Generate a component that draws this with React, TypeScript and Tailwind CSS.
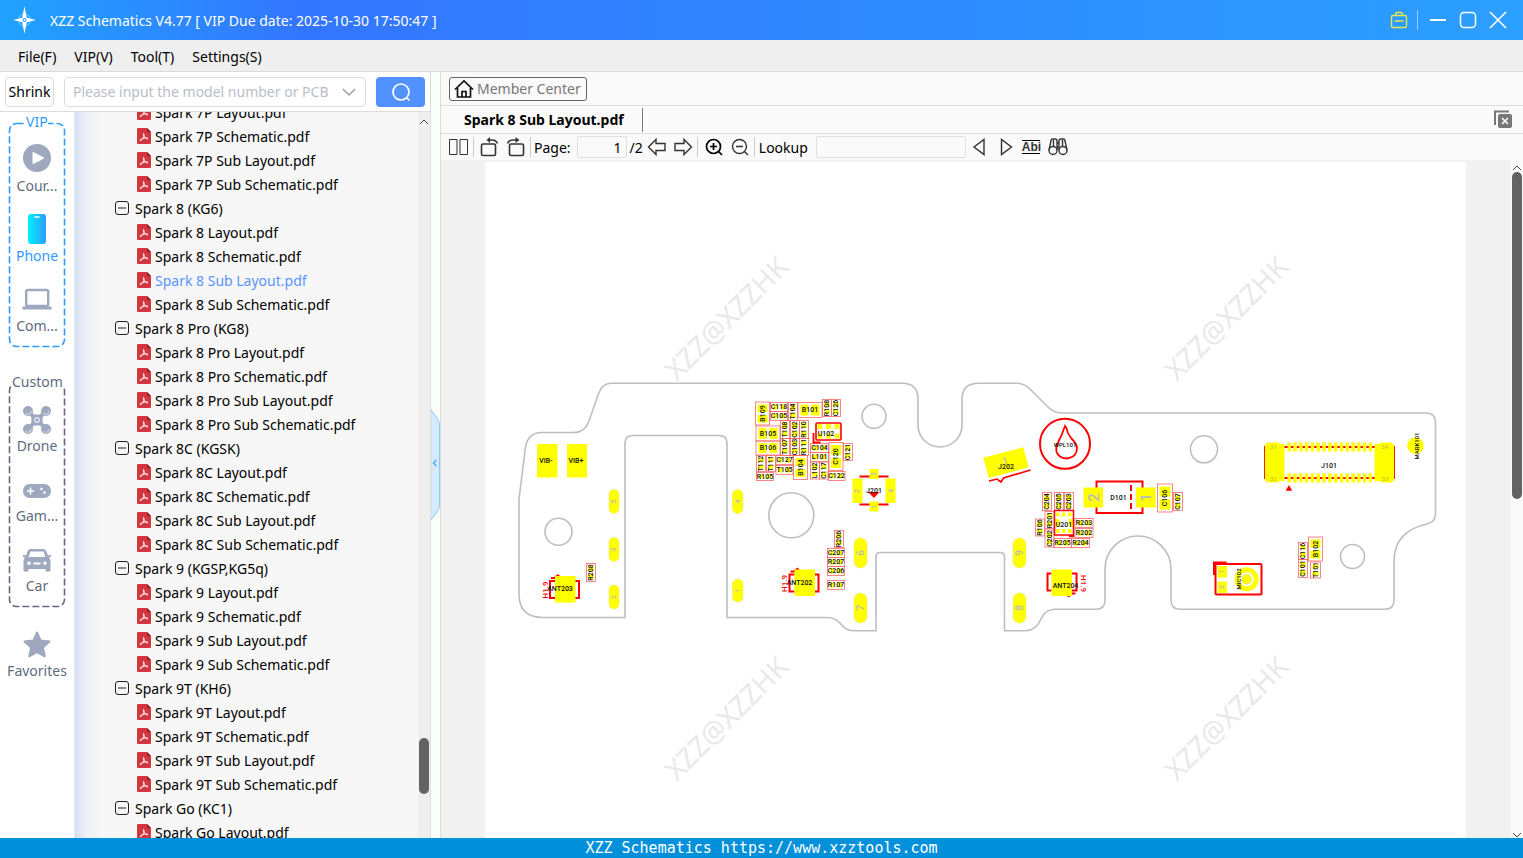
import React from 'react';

type Group = { name: string; files: string[] };

const model = (name: string, prefix: string): Group => ({
  name,
  files: ['Layout', 'Schematic', 'Sub Layout', 'Sub Schematic'].map(s => `${prefix} ${s}.pdf`),
});

const leading = ['Spark 7P Layout.pdf', 'Spark 7P Schematic.pdf', 'Spark 7P Sub Layout.pdf', 'Spark 7P Sub Schematic.pdf'];

const groups: Group[] = [
  model('Spark 8 (KG6)', 'Spark 8'),
  model('Spark 8 Pro (KG8)', 'Spark 8 Pro'),
  model('Spark 8C (KGSK)', 'Spark 8C'),
  model('Spark 9 (KGSP,KG5q)', 'Spark 9'),
  model('Spark 9T (KH6)', 'Spark 9T'),
  { name: 'Spark Go (KC1)', files: ['Spark Go Layout.pdf'] },
];

const activeFile = 'Spark 8 Sub Layout.pdf';

/* ---------- title bar ---------- */

function TitleBar() {
  return (
    <header className="flex h-10 shrink-0 items-center bg-linear-to-r from-[#1fa2ff] via-[#3375ff] via-20% to-[#2b9fff] pl-3 pr-[15px] text-white">
      <svg className="size-7 shrink-0" viewBox="0 0 28 28" fill="#fff">
        <circle cx="12.500" cy="14" r="6" fill="none" stroke="#fff" strokeWidth="1" opacity=".45" />
        <path d="M12.500 0l2.200 11.800L24 14l-9.300 2.200L12.500 28l-2.200-11.800L1 14l9.300-2.200z" />
        <circle cx="12.500" cy="14" r="2" fill="#2b95ff" />
        <circle cx="12.500" cy="14" r="1" />
      </svg>
      <h1 className="ml-2.5 flex-1 text-[14px]">XZZ Schematics V4.77 [ VIP Due date: 2025-10-30 17:50:47 ]</h1>
      <div className="flex items-center">
        <button aria-label="Toolbox">
          <svg className="size-5" viewBox="0 0 20 20" fill="none" stroke="#e3e84a" strokeWidth="1.4">
            <rect x="2.500" y="5.500" width="15" height="12" rx="1.500" />
            <path d="M6.500 5.500V4Q6.500 2.500 8 2.500h4q1.500 0 1.500 1.500v1.500M5.500 11h9" />
          </svg>
        </button>
        <span className="ml-2 mr-2.5 h-5 w-px bg-white/50" />
        <button aria-label="Minimize" className="mr-2.5">
          <svg className="size-5" viewBox="0 0 20 20" stroke="#fff" strokeWidth="2"><path d="M2 10h16" /></svg>
        </button>
        <button aria-label="Maximize" className="mr-2.5">
          <svg className="size-5" viewBox="0 0 20 20" fill="none" stroke="#fff" strokeWidth="1.500"><rect x="2.500" y="2.500" width="15" height="15" rx="3.500" /></svg>
        </button>
        <button aria-label="Close">
          <svg className="size-5" viewBox="0 0 20 20" stroke="#fff" strokeWidth="1.600"><path d="M2 2l16 16M18 2L2 18" /></svg>
        </button>
      </div>
    </header>
  );
}

/* ---------- category rail ---------- */

const CourseIcon = () => (
  <svg className="mb-1 size-7" viewBox="0 0 28 28" fill="#9ea8be">
    <circle cx="14" cy="14" r="14" />
    <path d="M9.500 9.200Q9.500 7.500 11 8.300l9.500 4.900q1.300.8 0 1.600L11 19.700q-1.500.8-1.500-.9z" fill="#fff" />
  </svg>
);

const PhoneIcon = () => (
  <svg className="h-8 w-7" viewBox="0 0 28 32">
    <defs>
      <linearGradient id="phone" x1="0" x2="1"><stop stopColor="#00f2fe" /><stop offset="1" stopColor="#2f9bff" /></linearGradient>
    </defs>
    <rect x="5" y="0" width="18" height="30" rx="3" fill="url(#phone)" />
    <path d="M12 3h4" stroke="#fff" strokeWidth="1.500" strokeLinecap="round" />
  </svg>
);

const ComputerIcon = () => (
  <svg className="h-8 w-8" viewBox="0 0 32 32" fill="none" stroke="#9ea8be">
    <rect x="5.200" y="6" width="22" height="16" rx="1.500" strokeWidth="2.400" />
    <path d="M1.500 24h29" strokeWidth="3" />
  </svg>
);

const DroneIcon = () => (
  <svg className="size-8" viewBox="0 0 32 32" fill="#9ea8be">
    <path d="M7 6L13 11h6L25 6l1 2-5 5v6l5 5-1 2-6-5h-6L7 26l-1-2 5-5v-6L6 8z" stroke="#9ea8be" strokeWidth="1.200" />
    <circle cx="7" cy="7" r="5" /><circle cx="25" cy="7" r="5" />
    <circle cx="7" cy="25" r="5" /><circle cx="25" cy="25" r="5" />
    <g fill="none" stroke="#e6e9f0" strokeWidth=".8">
      <circle cx="7" cy="7" r="3.300" strokeDasharray="8 12" /><circle cx="25" cy="7" r="3.300" strokeDasharray="8 12" />
      <circle cx="7" cy="25" r="3.300" strokeDasharray="8 12" /><circle cx="25" cy="25" r="3.300" strokeDasharray="8 12" />
      <circle cx="16" cy="16" r="2.300" strokeWidth="1.200" />
    </g>
  </svg>
);

const GameIcon = () => (
  <svg className="size-8" viewBox="0 0 32 32">
    <rect x="2" y="10" width="28" height="14" rx="6.500" fill="#9ea8be" />
    <path d="M9.500 13.500v7M6 17h7" stroke="#fff" strokeWidth="1.600" />
    <circle cx="20.500" cy="15" r="1.300" fill="#fff" /><circle cx="23.500" cy="18.500" r="1.300" fill="#fff" />
  </svg>
);

const CarIcon = () => (
  <svg className="size-8" viewBox="0 0 32 32">
    <path
      fillRule="evenodd"
      fill="#9ea8be"
      d="M9.500 5h13q2 0 2.700 2l1.800 4.500 2.500-.8.700 2-2.200 1Q29.500 15 29.500 17v9.500q0 1-1 1H25.500q-1 0-1-1V25h-17v1.500q0 1-1 1h-3q-1 0-1-1V17q0-2 1.500-3.300l-2.200-1 .7-2 2.500.8L6.800 7Q7.500 5 9.500 5zM9.500 7.500L7.500 13h17l-2-5.500zM8 17.500a1.800 1.800 0 100 3.600 1.800 1.800 0 000-3.600zm16 0a1.800 1.800 0 100 3.600 1.800 1.800 0 000-3.600zM12.500 18.500v2h7v-2z"
    />
  </svg>
);

const StarIcon = () => (
  <svg className="size-8" viewBox="0 0 32 32" fill="#9ea8be" stroke="#9ea8be" strokeWidth="2" strokeLinejoin="round">
    <path d="M16 3.500l3.600 8 8.900 1-6.600 6 1.900 8.800L16 23l-7.800 4.300 1.900-8.800-6.600-6 8.900-1z" />
  </svg>
);

function RailItem({ icon, label, active }: { icon: React.ReactNode; label: string; active?: boolean }) {
  return (
    <button className="flex h-[70px] w-full flex-col items-center justify-end">
      <span className="flex h-8 items-center">{icon}</span>
      <span className={`h-[22px] text-[14px] leading-5 ${active ? 'text-[#2f9bff]' : 'text-[#606b80]'}`}>{label}</span>
    </button>
  );
}

function Rail() {
  return (
    <nav className="w-[75px] shrink-0 border-r border-gray-200 bg-white">
      <fieldset className="relative mx-2 mt-2.5 h-[226px] w-[58px] pt-1.5">
        <svg className="absolute inset-0 size-full" fill="none"><rect x="1.500" y="1.500" width="55" height="223" rx="7" stroke="#2f9bff" strokeWidth="1.600" strokeDasharray="7 3" /></svg>
        <legend className="absolute -top-2.5 left-[18px] bg-white text-[14px] leading-5 text-[#2f9bff]">VIP</legend>
        <RailItem icon={<CourseIcon />} label="Cour..." />
        <RailItem icon={<PhoneIcon />} label="Phone" active />
        <RailItem icon={<ComputerIcon />} label="Com..." />
      </fieldset>
      <fieldset className="relative mx-2 mt-[34px] h-[226px] w-[58px] pt-1.5">
        <svg className="absolute inset-0 size-full" fill="none"><rect x="1.500" y="1.500" width="55" height="223" rx="7" stroke="#606b80" strokeWidth="1.600" strokeDasharray="7 3" /></svg>
        <legend className="absolute -top-2.5 left-1 bg-white text-[14px] leading-5 text-[#606b80]">Custom</legend>
        <RailItem icon={<DroneIcon />} label="Drone" />
        <RailItem icon={<GameIcon />} label="Gam..." />
        <RailItem icon={<CarIcon />} label="Car" />
      </fieldset>
      <div className="mt-[5px]">
        <RailItem icon={<StarIcon />} label="Favorites" />
      </div>
    </nav>
  );
}

/* ---------- file tree ---------- */

const PdfIcon = () => (
  <svg className="h-4 w-3.5 shrink-0" viewBox="0 0 14 16">
    <path d="M1 0h9l4 4v11q0 1-1 1H1q-1 0-1-1V1q0-1 1-1z" fill="#d2373f" />
    <path d="M10 0l4 4h-3q-1 0-1-1z" fill="#8d1a22" />
    <path d="M6.500 5.500q1 0 .3 3-.8 2.500-3 4-1.300.3-.3-.8 2.500-1.700 5.500-1.900 2.500.3 1.800 1-1.500.3-3.300-1.800Q6 6.500 6.500 5.500z" fill="none" stroke="#fff" strokeWidth=".9" />
  </svg>
);

function FileRow({ name }: { name: string }) {
  return (
    <li>
      <a href="#" className={`flex h-6 items-center gap-1 pl-[62px] ${name === activeFile ? 'text-[#5a94ff]' : 'text-black'}`}>
        <PdfIcon />
        <span className="whitespace-nowrap">{name}</span>
      </a>
    </li>
  );
}

function Tree() {
  return (
    <div className="flex min-w-0 flex-1 overflow-hidden bg-[#f7f7f7]">
      <div className="min-w-0 flex-1 bg-linear-to-r from-[#d6e0f2] via-[#ecf0f6] via-3% to-[#f7f7f7] to-8%">
        <ul className="-mt-3 text-[14px]">
          {leading.map(f => <FileRow key={f} name={f} />)}
          {groups.map(g => (
            <li key={g.name}>
              <button className="flex h-6 items-center gap-1.5 pl-10">
                <svg className="size-3.5" viewBox="0 0 14 14" fill="none" stroke="#222"><rect x=".5" y=".5" width="13" height="13" rx="2.500" /><path d="M3 7h8" /></svg>
                {g.name}
              </button>
              <ul>{g.files.map(f => <FileRow key={f} name={f} />)}</ul>
            </li>
          ))}
        </ul>
      </div>
      <div className="flex w-3 flex-col items-center bg-[#efefef]">
        <svg className="mt-1.5 h-2 w-3 shrink-0" viewBox="0 0 12 8" fill="none" stroke="#444"><path d="M2 6l4-4 4 4" /></svg>
        <div className="grow-[612]" />
        <div className="h-14 w-2.5 rounded-full bg-[#636363]" />
        <div className="grow-[44]" />
      </div>
    </div>
  );
}

/* ---------- left panel ---------- */

function LeftPanel() {
  return (
    <aside className="flex w-[431px] shrink-0 flex-col border-r border-[#dcdcdc] bg-white">
      <div className="flex h-10 shrink-0 items-center border-b border-[#dcdcdc] px-[5px]">
        <button className="h-[30px] w-[49px] rounded-sm border border-[#dcdcdc] bg-white text-[14px]">Shrink</button>
        <div className="ml-2.5 flex h-[30px] flex-1 items-center rounded-sm border border-[#dcdcdc] px-2">
          <input
            aria-label="Model number"
            className="min-w-0 flex-1 bg-transparent text-[14px] outline-none placeholder:text-[#b9bec8]"
            placeholder="Please input the model number or PCB"
          />
          <svg className="size-4 shrink-0" viewBox="0 0 16 16" fill="none" stroke="#9a9fa8" strokeWidth="1.500"><path d="M2 5l6 6 6-6" /></svg>
        </div>
        <button aria-label="Search" className="ml-2.5 flex h-[30px] w-[49px] items-center justify-center rounded-sm bg-[#5192ff]">
          <svg className="size-5" viewBox="0 0 20 20" fill="none" stroke="#fff" strokeWidth="1.700"><circle cx="10" cy="10" r="8" /><path d="M15.500 15.500l3 3" /></svg>
        </button>
      </div>
      <div className="flex min-h-0 flex-1">
        <Rail />
        <Tree />
      </div>
    </aside>
  );
}

/* ---------- board drawing ---------- */

type Part = [label: string, x: number, y: number, w: number, h: number];

const parts: Part[] = [
  ['B109', 755.500, 402, 14, 23], ['C118', 770.500, 402.500, 17, 9], ['C105', 770.500, 411.500, 17, 9],
  ['T104', 788.500, 402.500, 9, 18], ['B101', 798, 402.500, 24, 15], ['R108', 822.500, 399.500, 9, 17],
  ['C126', 831.500, 399.500, 9, 17], ['B105', 756, 426, 24, 15], ['T108', 780.500, 420.500, 9, 18],
  ['C102', 790.500, 420.500, 9, 18], ['R110', 799.500, 420.500, 9, 18], ['B106', 756, 441, 24, 14],
  ['T107', 780.500, 438.500, 9, 17], ['C103', 790.500, 438.500, 9, 17], ['R111', 799.500, 438.500, 9, 17],
  ['C104', 810.500, 443.500, 18, 9], ['L101', 810.500, 452.500, 18, 9], ['C120', 829, 442.500, 14, 28],
  ['C121', 843.500, 443.500, 9, 17], ['T112', 756.500, 455.500, 9, 16], ['T111', 766.500, 455.500, 9, 16],
  ['C127', 776, 455.500, 17, 9], ['T105', 776, 465.500, 17, 9], ['B104', 793.500, 455.500, 14, 24],
  ['L102', 810.500, 462, 9, 17], ['C117', 819.500, 462, 9, 17], ['C122', 828, 471.500, 17, 9],
  ['R105', 756.500, 472.500, 17, 8], ['R206', 834.500, 530.500, 9, 17], ['C207', 827.500, 548.500, 17, 9],
  ['R207', 827.500, 557.500, 17, 9], ['C206', 827.500, 566.500, 17, 9], ['R107', 827.500, 580.500, 17, 9],
  ['R208', 586.500, 563.500, 9, 18], ['C204', 1042.500, 492.500, 9, 18], ['C205', 1054.500, 492.500, 9, 18],
  ['C203', 1064.500, 492.500, 9, 18], ['R201', 1045, 511.500, 9, 17], ['R106', 1035.500, 519, 9, 17],
  ['C202', 1045, 530, 9, 17], ['R203', 1075, 518.500, 18, 9], ['R202', 1075, 528.500, 18, 9],
  ['R205', 1053.500, 538.500, 18, 9], ['R204', 1071.500, 538.500, 18, 9], ['C106', 1157.500, 484, 15, 28],
  ['C107', 1173.500, 492.500, 9, 18], ['C116', 1298.500, 542.500, 9, 17], ['C101', 1298.500, 559.500, 9, 18],
  ['B102', 1308.500, 537, 14, 24], ['T101', 1310.500, 562, 10, 16],
];

function Label({ x, y, text, size = 7, turn = 0, color = '#111' }: { x: number; y: number; text: string; size?: number; turn?: number; color?: string }) {
  return (
    <text x={x} y={y} fontSize={size} fill={color} textAnchor="middle" dominantBaseline="central" transform={turn ? `rotate(${turn} ${x} ${y})` : undefined}>
      {text}
    </text>
  );
}

function PartBox({ part }: { part: Part }) {
  const [label, x, y, w, h] = part;
  const tall = h > w;
  const cx = x + w / 2;
  const cy = y + h / 2;
  return (
    <g>
      <rect x={x} y={y} width={w} height={h} fill="none" stroke="#f66" strokeWidth=".8" />
      {tall ? (
        <>
          <rect x={x + 2} y={y + 2.5} width={w - 4} height={h / 2 - 4} fill="#ff0" />
          <rect x={x + 2} y={cy + 1.5} width={w - 4} height={h / 2 - 4} fill="#ff0" />
        </>
      ) : (
        <>
          <rect x={x + 2.5} y={y + 2} width={w / 2 - 4} height={h - 4} fill="#ff0" />
          <rect x={cx + 1.5} y={y + 2} width={w / 2 - 4} height={h - 4} fill="#ff0" />
        </>
      )}
      <Label x={cx} y={cy} text={label} turn={tall ? -90 : 0} />
    </g>
  );
}

function Pill({ x, y, w, h, n }: { x: number; y: number; w: number; h: number; n: string }) {
  return (
    <g>
      <rect x={x} y={y} width={w} height={h} rx={w / 2} fill="#ff0" stroke="#e8e060" strokeWidth=".5" />
      <Label x={x + w / 2} y={y + h / 2} text={n} turn={-90} size={w - 3} color="#bbb" />
    </g>
  );
}

function Antenna({ x, y, name, flip }: { x: number; y: number; name: string; flip?: boolean }) {
  return (
    <g>
      <g fill="none" stroke="#f00" strokeWidth="2" transform={flip ? `rotate(180 ${x + 10} ${y + 13})` : undefined}>
        <path d={`M${x} ${y + 5}h-5v17h5M${x + 20} ${y + 5}h4v17h-4M${x - 4} ${y + 2}h5`} />
        <path d={`M${x - 1} ${y + 1}l4-3 3 3z`} fill="#f00" stroke="none" />
      </g>
      <rect x={x} y={y} width="20.500" height="26.500" fill="#ff0" />
      <Label x={flip ? x + 14 : x + 5} y={flip ? y + 16 : y + 13} text={name} />
      <Label x={flip ? x + 32 : x - 10} y={y + 14} text="H1.9" size={8} turn={flip ? 90 : -90} color="#f00" />
    </g>
  );
}

const pins = Array.from({ length: 15 }, (_, i) => 1287.5 + i * 5.8);

function Board() {
  return (
    <svg className="block w-full" viewBox="485 162 981 676" fontFamily='Roboto, "Liberation Sans", sans-serif' fontWeight="500">
      {/* page watermark */}
      <g fill="#e9e9e9" fontFamily='"Noto Sans", "Open Sans", sans-serif' fontSize="28" fontWeight="400">
        {[[677, 382], [1177, 382], [677, 782], [1177, 782]].map(([x, y]) => (
          <text key={`${x}-${y}`} x={x} y={y} transform={`rotate(-45 ${x} ${y})`}>XZZ@XZZHK</text>
        ))}
      </g>

      {/* board outline and holes */}
      <g fill="none" stroke="#bebebe" strokeWidth="1.600">
        <path d="M611 383.300H902Q918 383.300 918 399V425A22 22 0 00962 425V399Q962 383.300 979 383.300H1016Q1024 383.300 1030 389L1048 407Q1054 413 1062 413H1426Q1435.500 413 1435.500 423V514Q1435.500 522 1427 524Q1394 531 1394 562V600Q1394 609.300 1385 609.300H1180Q1171 609.300 1171 600V569A33 33 0 001105 569V600Q1105 609.300 1096 609.300H1055Q1045 609.300 1041 619Q1036 630.800 1025 630.800H1004.500V557Q1004.500 552.500 1000 552.500H880Q876 552.500 876 557V630.800H853Q846 630.800 840 623Q835 617.500 826 617.500H727V443Q727 435.500 719 435.500H633Q625 435.500 625 443V617.500H543Q519 617.500 519 594V499L525.500 447Q528 432.500 542 432.500H574Q585 432.500 589 421L598 395Q602 383.300 611 383.300Z" />
        <circle cx="874" cy="416.300" r="12" />
        <circle cx="791.300" cy="515.300" r="22.500" />
        <circle cx="558.500" cy="531.700" r="13.500" />
        <circle cx="1204" cy="449.300" r="13.500" />
        <circle cx="1352.500" cy="556.500" r="12" />
      </g>

      {parts.map(p => <PartBox key={p[0]} part={p} />)}

      {/* vibration pads */}
      <rect x="537" y="444" width="20.500" height="33.500" fill="#ff0" />
      <rect x="567" y="444" width="20" height="33.500" fill="#ff0" />
      <Label x={546} y={461} text="VIB-" />
      <Label x={576} y={461} text="VIB+" />

      <Pill x={609} y={489.500} w={10} h={24} n="5" />
      <Pill x={609} y={537.500} w={10} h={24} n="3" />
      <Pill x={609} y={585} w={10} h={24} n="2" />
      <Pill x={732.500} y={489.500} w={10.500} h={24} n="4" />
      <Pill x={732.500} y={579} w={10.500} h={23} n="1" />
      <Pill x={854} y={538} w={13} h={30} n="6" />
      <Pill x={854} y={593} w={13} h={30} n="7" />
      <Pill x={1013} y={538} w={13} h={30} n="9" />
      <Pill x={1013} y={593} w={13} h={30} n="8" />

      <Antenna x={555} y={576} name="ANT203" />
      <Antenna x={794.500} y={569.500} name="ANT202" />
      <Antenna x={1051.500} y={569.500} name="ANT204" flip />

      {/* U102 */}
      <g fill="#ff0">
        {[817.500, 826, 834.500].map(x => (
          <React.Fragment key={x}><rect x={x} y="424" width="5" height="5" /><rect x={x} y="433.500" width="5" height="5" /></React.Fragment>
        ))}
      </g>
      <rect x="816" y="423" width="25" height="17" rx="1" fill="none" stroke="#f00" strokeWidth="1.600" />
      <path d="M813.500 433v9.500h7" fill="none" stroke="#f00" strokeWidth="1.800" />
      <Label x={826} y={433.500} text="U102" />

      {/* U201 */}
      <g fill="#ff0">
        {[1056, 1062, 1068].map(x => (
          <React.Fragment key={x}><rect x={x} y="512.500" width="3.500" height="4" /><rect x={x} y="529" width="3.500" height="4" /></React.Fragment>
        ))}
        <rect x="1055.500" y="519" width="4" height="8" /><rect x="1069" y="519" width="4" height="8" />
      </g>
      <path d="M1054.500 510.500h19V535h-19zM1069 536.500h4.500V531" fill="none" stroke="#f00" strokeWidth="1.500" />
      <Label x={1064} y={524.500} text="U201" />

      {/* J201 */}
      <path d="M859.500 476.500h29M859.500 504.500h29" stroke="#f00" strokeWidth="2" />
      <path d="M852.500 478.500h10V503h-10zM885.500 478.500h10V503h-10zM869.500 469h9v10h-9zM869.500 501.500h9v10h-9z" fill="#ff0" />
      <Label x={857} y={491} text="2" turn={-90} color="#bbb" />
      <Label x={891} y={491} text="4" turn={-90} color="#bbb" />
      <Label x={874} y={474} text="3" turn={-90} color="#bbb" />
      <Label x={874} y={506.500} text="1" turn={-90} color="#bbb" />
      <path d="M868 492h11.500l-5.500 6z" fill="#f00" />
      <Label x={874} y={491} text="J201" />

      {/* J202 */}
      <path d="M983.300 457.700l40-10.400 5.400 20L989 478z" fill="#ff0" />
      <Label x={1005} y={461} text="1" size={10} turn={-15} color="#bbb" />
      <Label x={1006} y={467} text="J202" />
      <path d="M989 481l8-2 4 3 2.500-4 27-8" fill="none" stroke="#f00" strokeWidth="1.600" />

      {/* water indicator */}
      <circle cx="1065" cy="443.800" r="25" fill="none" stroke="#f00" strokeWidth="2" />
      <path d="M1065 426Q1062 435 1058 442.500Q1055 449 1057 453Q1060 458.500 1067 458.500Q1077 457 1077 448Q1077 444 1071 438Q1067 433 1066.500 428Z" fill="none" stroke="#f00" strokeWidth="1.800" />
      <Label x={1065} y={444.500} text="WPL101" size={6} />

      {/* D101 */}
      <rect x="1096.500" y="481.500" width="46" height="31.500" fill="none" stroke="#f00" strokeWidth="2" />
      <path d="M1131 485v24" stroke="#f00" strokeWidth="2" strokeDasharray="6 3" />
      <rect x="1083.500" y="487.500" width="19.500" height="20" fill="#ff0" />
      <rect x="1136" y="487.500" width="19.500" height="20" fill="#ff0" />
      <Label x={1093.500} y={497.500} text="2" size={15} turn={-90} color="#bbb" />
      <Label x={1146} y={497.500} text="1" size={15} turn={-90} color="#bbb" />
      <Label x={1118.500} y={498} text="D101" />

      {/* J101 */}
      <path d="M1284 447h91M1284 478h91M1265 446v33M1394 446v33" stroke="#f00" strokeWidth="1.800" />
      <g fill="#ff0">
        <path d="M1267 442.500h12v1.500h5.500v37h-5.500v1.500h-12v-1.500h-2v-37h2zM1380 442.500h12v1.500h2v37h-2v1.500h-12v-1.500h-5.500v-37h5.500z" />
        {pins.map(x => (
          <React.Fragment key={x}><rect x={x} y="442.500" width="3.500" height="9" /><rect x={x} y="473.500" width="3.500" height="9" /></React.Fragment>
        ))}
      </g>
      <Label x={1273.500} y={446.500} text="31" size={6} color="#c5c52a" />
      <Label x={1273.500} y={478.500} text="32" size={6} color="#c5c52a" />
      <Label x={1385} y={446.500} text="34" size={6} color="#c5c52a" />
      <Label x={1385} y={478.500} text="33" size={6} color="#c5c52a" />
      <Label x={1329} y={466} text="J101" />
      <path d="M1289 486.500l2 3.500h-4z" fill="#f00" stroke="#f00" strokeWidth="1.500" />

      {/* MIC102 */}
      <rect x="1215.500" y="564" width="46" height="30.500" rx="1" fill="none" stroke="#f00" strokeWidth="2" />
      <path d="M1214.500 575v-12h12" fill="none" stroke="#f00" strokeWidth="3" />
      <path d="M1217.500 566h9.500v11.500h-9.500zM1217.500 581.500h9.500v11.500h-9.500z" fill="#ff0" />
      <circle cx="1246.700" cy="579.300" r="9.500" fill="none" stroke="#ff0" strokeWidth="5" />
      <circle cx="1246.700" cy="579.300" r="5" fill="#ff0" stroke="#d8d090" strokeWidth=".6" />
      <Label x={1222} y={571.500} text="1" turn={-90} color="#bbb" />
      <Label x={1222} y={587} text="2" turn={-90} color="#bbb" />
      <Label x={1238} y={579} text="MIC102" size={6} turn={-90} />

      <circle cx="1415.500" cy="445.700" r="8.300" fill="#ff0" />
      <Label x={1416.500} y={446} text="MARK101" size={6} turn={-90} />
    </svg>
  );
}

/* ---------- viewer ---------- */

function ToolButton({ label, className = '', children }: { label: string; className?: string; children: React.ReactNode }) {
  return (
    <button aria-label={label} className={`shrink-0 ${className}`}>
      <svg className="size-5" viewBox="0 0 20 20" fill="none" stroke="#333" strokeWidth="1.400">{children}</svg>
    </button>
  );
}

function Toolbar() {
  return (
    <div className="flex h-[26px] shrink-0 items-center bg-[#fafafa] pl-2 text-[14px]">
      <ToolButton label="Two pages"><path d="M.5 2.500h7.500v15H.500zM11 2.500h7.500v15H11z" strokeWidth="1" /></ToolButton>
      <span className="ml-1 h-5 w-px bg-[#ccc]" />
      <ToolButton label="Rotate left" className="ml-1.5"><rect x="1.500" y="7" width="14" height="11.500" rx="1.500" strokeWidth="1.600" /><path d="M8 3h4q4 0 5.500 3.500" strokeWidth="1.600" /><path d="M10 0v6L6.500 3z" fill="#333" stroke="none" /></ToolButton>
      <ToolButton label="Rotate right" className="ml-1.5"><rect x="3.500" y="7" width="14" height="11.500" rx="1.500" strokeWidth="1.600" /><path d="M11 3H7Q3 3 1.500 6.500" strokeWidth="1.600" /><path d="M9.500 0v6L13.500 3z" fill="#333" stroke="none" /></ToolButton>
      <span className="ml-1 h-5 w-px bg-[#ccc]" />
      <label htmlFor="page" className="ml-[3px]">Page:</label>
      <input id="page" defaultValue="1" className="ml-1.5 h-[22px] w-[50px] rounded-xs border border-[#e0e0e0] px-1 text-right outline-none" />
      <span className="ml-[3px]">/2</span>
      <ToolButton label="Previous page" className="ml-1"><path d="M1.500 10L9 2.500V6.500h9v7H9v4z" /></ToolButton>
      <ToolButton label="Next page" className="ml-1.5"><path d="M18.500 10L11 2.500V6.500H2v7h9v4z" /></ToolButton>
      <span className="ml-1 h-5 w-px bg-[#ccc]" />
      <ToolButton label="Zoom in" className="ml-1.5"><g stroke="#000" strokeWidth="1.700"><circle cx="9.500" cy="9.500" r="7" /><path d="M14.500 14.500l3.500 3.500M9.500 6v7M6 9.500h7" /></g></ToolButton>
      <ToolButton label="Zoom out" className="ml-1.5"><circle cx="9.500" cy="9.500" r="7" /><path d="M14.500 14.500l3.500 3.500M6 9.500h7" /></ToolButton>
      <span className="ml-1 h-5 w-px bg-[#ccc]" />
      <label htmlFor="lookup" className="ml-1">Lookup</label>
      <input id="lookup" className="ml-2 h-[22px] w-[150px] rounded-xs border border-[#e0e0e0] px-1 outline-none" />
      <ToolButton label="Find previous" className="ml-1"><path d="M14 2.500v15L4 10z" /></ToolButton>
      <ToolButton label="Find next" className="ml-1.5"><path d="M5.500 2.500v15L15.500 10z" /></ToolButton>
      <button className="ml-1.5 w-[18px] border-y border-black text-center font-['Liberation_Sans',sans-serif] text-[12px] leading-3 font-bold text-[#333]">Abi</button>
      <ToolButton label="Find" className="ml-2">
        <circle cx="5" cy="13.500" r="4" /><circle cx="15" cy="13.500" r="4" />
        <path d="M1 13L3 4q0-2 2-2h2q2 0 2 2v9M19 13L17 4q0-2-2-2h-2q-2 0-2 2v9M9 6h2M9 10h2M5.500 3v6M14.500 3v6" />
      </ToolButton>
    </div>
  );
}

function Viewer() {
  return (
    <main className="flex min-w-0 flex-1 flex-col border-l border-[#dcdcdc] bg-[#fafafa]">
      <div className="flex h-[34px] shrink-0 items-center border-b border-[#dcdcdc] pl-2">
        <button className="flex h-6 items-center gap-[3px] rounded-[3px] border border-[#666] pl-1 pr-[5px] text-[14px] text-[#777]">
          <svg className="size-5" viewBox="0 0 20 20" fill="none" stroke="#111" strokeWidth="1.700"><path d="M1 10.500L10 2l9 8.500M3.500 9v9h13V9M8 18v-5.500h4V18" /></svg>
          Member Center
        </button>
      </div>
      <div className="flex h-7 shrink-0 items-center justify-between border-b border-[#dcdcdc] pr-2.5">
        <button className="h-6 border-r border-[#777] pl-[23px] pr-[18px] text-[14px] font-bold">{activeFile}</button>
        <button aria-label="Close all tabs">
          <svg className="size-5" viewBox="0 0 20 20"><path d="M2 15V1.500h14" fill="none" stroke="#777" strokeWidth="2" /><rect x="5" y="4" width="14" height="14" rx="2" fill="#777" /><path d="M9 8l6 6M15 8l-6 6" stroke="#fff" strokeWidth="1.500" /></svg>
        </button>
      </div>
      <Toolbar />
      <div className="flex min-h-0 flex-1 bg-[#f1f1f1]">
        <div className="min-w-0 flex-1 overflow-hidden pl-11 pr-[45px] pt-0.5">
          <div className="h-full bg-white"><Board /></div>
        </div>
        <div className="flex w-3 shrink-0 flex-col items-center bg-[#fafafa]">
          <svg className="mt-1 h-2 w-3 shrink-0" viewBox="0 0 12 8" fill="none" stroke="#444"><path d="M2 6l4-4 4 4" /></svg>
          <div className="h-[327px] w-2.5 rounded-full bg-[#636363]" />
          <div className="flex-1" />
          <svg className="h-1.5 w-3 shrink-0" viewBox="0 0 12 6" fill="none" stroke="#444"><path d="M2 1l4 4 4-4" /></svg>
        </div>
      </div>
    </main>
  );
}

export default function App() {
  return (
    <div className="flex h-screen flex-col overflow-hidden bg-white font-['Noto_Sans','Open_Sans',sans-serif] text-black">
      <TitleBar />
      <nav className="flex h-8 shrink-0 items-center gap-[18px] border-b border-[#dcdcdc] bg-[#efefef] px-[18px] pt-px text-[14px]">
        {['File(F)', 'VIP(V)', 'Tool(T)', 'Settings(S)'].map(m => <button key={m}>{m}</button>)}
      </nav>
      <div className="flex min-h-0 flex-1">
        <LeftPanel />
        <div className="flex w-[9px] shrink-0 items-center bg-[#f9fff9]">
          <button aria-label="Collapse panel" className="mt-5">
            <svg className="block h-[110px] w-[9px]" viewBox="0 0 9 110" fill="#d6eaff" stroke="#8cc8f8"><path d="M0 0l6 8q2.500 3 2.500 7v80q0 4-2.500 7l-6 8" /><path d="M5.500 50l-3 3 3 3" fill="none" stroke="#4db0f0" strokeWidth="1.400" /></svg>
          </button>
        </div>
        <Viewer />
      </div>
      <footer className="flex h-5 shrink-0 items-center justify-center bg-[#0390db] font-['DejaVu_Sans_Mono',monospace] text-[15px] text-white">
        XZZ Schematics https://www.xzztools.com
      </footer>
    </div>
  );
}
